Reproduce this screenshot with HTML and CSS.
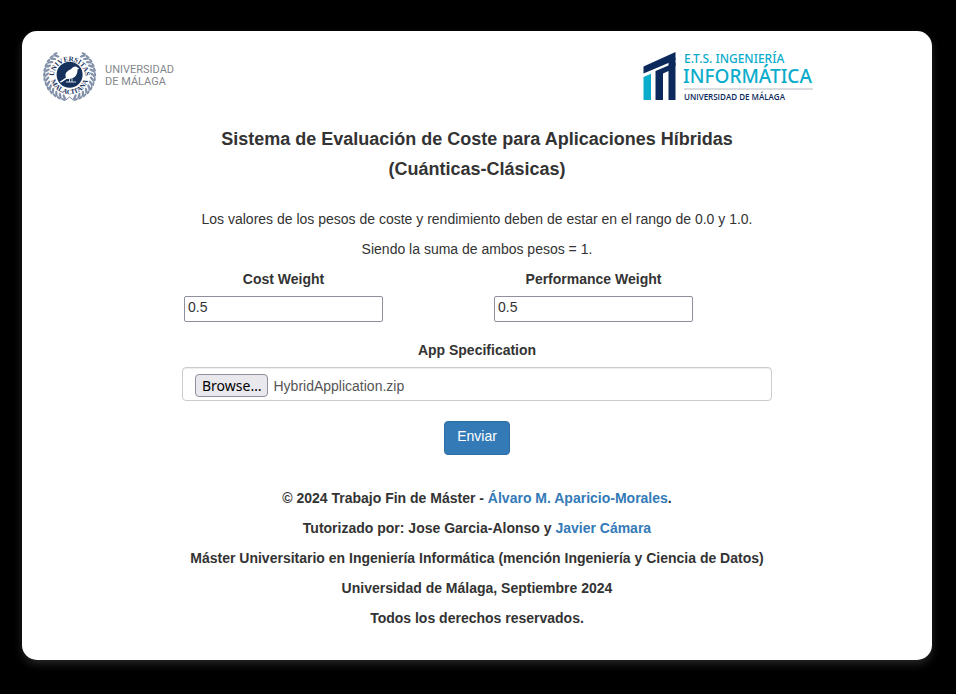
FILE: index.html
```html
<!DOCTYPE html>
<html lang="es">
<head>
<meta charset="utf-8">
<meta name="viewport" content="width=device-width, initial-scale=1">
<title>Sistema de Evaluación de Coste</title>
<link rel="stylesheet" href="styles.css">
</head>
<body>
<main class="card">
  <header class="logos">
    <svg class="logo logo-uma" viewBox="42 50 134 52" role="img" aria-label="Universidad de Málaga">
      <defs>
        <g id="leaf">
          <ellipse cx="69.6" cy="52.2" rx="1.2" ry="2.6" transform="rotate(38 69.6 52.2)"/>
          <ellipse cx="69.6" cy="49.4" rx="1.1" ry="2.4" transform="rotate(80 69.6 49.4)"/>
          <circle cx="71.4" cy="50.6" r="0.9"/>
        </g>
        <g id="branch">
          <use href="#leaf" transform="rotate(34 69.6 74.8)"/>
          <use href="#leaf" transform="rotate(45 69.6 74.8)"/>
          <use href="#leaf" transform="rotate(56 69.6 74.8)"/>
          <use href="#leaf" transform="rotate(67 69.6 74.8)"/>
          <use href="#leaf" transform="rotate(78 69.6 74.8)"/>
          <use href="#leaf" transform="rotate(89 69.6 74.8)"/>
          <use href="#leaf" transform="rotate(100 69.6 74.8)"/>
          <use href="#leaf" transform="rotate(111 69.6 74.8)"/>
          <use href="#leaf" transform="rotate(122 69.6 74.8)"/>
          <use href="#leaf" transform="rotate(133 69.6 74.8)"/>
          <use href="#leaf" transform="rotate(144 69.6 74.8)"/>
          <use href="#leaf" transform="rotate(155 69.6 74.8)"/>
          <use href="#leaf" transform="rotate(166 69.6 74.8)"/>
        </g>
        <path id="arc-top" d="M55.500 83.500A15.600 15.600 0 1 1 83.700 83.500"/>
        <path id="arc-bottom" d="M50.200 74.800A19.400 19.400 0 0 0 89 74.800"/>
      </defs>
      <g class="wreath">
        <use href="#branch"/>
        <use href="#branch" transform="translate(139.2 0) scale(-1 1)"/>
        <path d="M66 100l3.600-3 3.600 3" fill="none" stroke="#8190a8"/>
      </g>
      <circle cx="69.6" cy="74.8" r="13" fill="#16325c"/>
      <path d="M59.500 82l6.500-4.500c-1.500-4 .8-6.500 4.500-8l2.500-2.200c1.400-1.300 3.600-1.200 4.500.3l1.700 1-1.700.8c.2 5.200-2.800 8.700-7.200 9.400l-3.800.1-5.300 3.700z" fill="#fff"/>
      <path d="M66 82h10M69.500 78.500v3.500M72 78.500v3.500" stroke="#fff" stroke-width=".8"/>
      <text class="seal-text"><textPath href="#arc-top" startOffset="50%" text-anchor="middle">UNIVERSITAS</textPath></text>
      <text class="seal-text"><textPath href="#arc-bottom" startOffset="50%" text-anchor="middle">MALACITANA</textPath></text>
      <text class="uma-text" x="105" y="73">UNIVERSIDAD</text>
      <text class="uma-text" x="105" y="85">DE MÁLAGA</text>
    </svg>
    <svg class="logo logo-ets" viewBox="642 50 172 52" role="img" aria-label="E.T.S. Ingeniería Informática">
      <path d="M643.500 66.500L675.500 52v8L643.500 73.500z" fill="#0b2a5b"/>
      <path d="M655.500 71L675.500 62.500V100h-7V71l-5.500 2.500V100h-7.500z" fill="#0b2a5b"/>
      <path d="M668.500 58h7v8h-7z" fill="#0b2a5b"/>
      <path d="M643.500 77l7.500-3.200V100h-7.500z" fill="#0aaccb"/>
      <text class="ets-school" x="684" y="63">E.T.S. INGENIERÍA</text>
      <text class="ets-name" x="683" y="83">INFORMÁTICA</text>
      <path d="M684 89h129" stroke="#b5b9c0"/>
      <text class="ets-uni" x="684" y="100">UNIVERSIDAD DE MÁLAGA</text>
    </svg>
  </header>

  <h1 class="title">Sistema de Evaluación de Coste para Aplicaciones Híbridas<br>(Cuánticas-Clásicas)</h1>

  <p>Los valores de los pesos de coste y rendimiento deben de estar en el rango de 0.0 y 1.0.</p>
  <p>Siendo la suma de ambos pesos = 1.</p>

  <form class="form">
    <div class="weights">
      <div class="field">
        <label for="cost">Cost Weight</label>
        <input class="weight" id="cost" type="text" value="0.5">
      </div>
      <div class="field">
        <label for="performance">Performance Weight</label>
        <input class="weight" id="performance" type="text" value="0.5">
      </div>
    </div>
    <label class="spec-label" for="spec">App Specification</label>
    <label class="file-box">
      <input class="file-input" id="spec" type="file">
      <span class="browse">Browse…</span>
      <span>HybridApplication.zip</span>
    </label>
    <button class="submit" type="submit">Enviar</button>
  </form>

  <footer class="footer">
    <p>© 2024 Trabajo Fin de Máster - <a href="#">Álvaro M. Aparicio-Morales</a>.</p>
    <p>Tutorizado por: Jose Garcia-Alonso y <a href="#">Javier Cámara</a></p>
    <p>Máster Universitario en Ingeniería Informática (mención Ingeniería y Ciencia de Datos)</p>
    <p>Universidad de Málaga, Septiembre 2024</p>
    <p>Todos los derechos reservados.</p>
  </footer>
</main>
</body>
</html>
```
FILE: styles.css
```css
* {
  box-sizing: border-box;
}

body {
  margin: 0;
  padding: 31px 24px 34px 22px;
  background: #000;
  color: #333;
  font: 14px/30px "Liberation Sans", Arial, sans-serif;
  text-align: center;
}

.card {
  padding: 19px 20px 27px;
  background: #fff;
  border-radius: 15px;
  box-shadow: 0 4px 8px rgba(255, 255, 255, 0.15);
}

.logos {
  display: grid;
  grid-template-columns: 69% 31%;
}

.logo {
  display: block;
  height: 52px;
}

.wreath {
  fill: #8190a8;
}

.seal-text {
  fill: #16325c;
  font: bold 7px "Liberation Serif", serif;
}

.uma-text {
  fill: #85888c;
  font: 11px Roboto, sans-serif;
}

.ets-school {
  fill: #0aaccb;
  font: 500 12px "Noto Sans", sans-serif;
}

.ets-name {
  fill: #0aaccb;
  font: 500 19px "Noto Sans", sans-serif;
}

.ets-uni {
  fill: #0b2a5b;
  font: 600 8px "Open Sans", sans-serif;
}

.title {
  margin: 22px 0 20px;
  font-size: 18px;
  line-height: 30px;
}

p {
  margin: 0;
}

.form {
  max-width: 590px;
  margin: 0 auto 28px;
}

.weights {
  display: grid;
  grid-template-columns: 310px 1fr;
}

.field {
  width: 203px;
  padding: 0 2px;
}

label {
  display: block;
  font-weight: bold;
}

.weight {
  display: block;
  width: 100%;
  height: 26px;
  margin: 2px 0 13px;
  padding: 0 3px 4px;
  border: 1px solid #8f8f9d;
  border-radius: 2px;
  background: #fff;
  color: #333;
  font: inherit;
  line-height: 20px;
}

.file-box {
  position: relative;
  display: flex;
  align-items: center;
  gap: 5px;
  height: 34px;
  margin: 2px 0 20px;
  padding: 3px 12px 0;
  border: 1px solid #ccc;
  border-radius: 4px;
  box-shadow: inset 0 1px 1px rgba(0, 0, 0, 0.075);
  color: #555;
  font-weight: normal;
}

.file-input {
  position: absolute;
  inset: 0;
  opacity: 0;
}

.browse {
  padding: 0 6px;
  border: 1px solid #8f8f9d;
  border-radius: 4px;
  background: #e9e9ed;
  color: #000;
  font: 14px/21px "Noto Sans", sans-serif;
}

.submit {
  display: block;
  height: 34px;
  margin: 0 auto;
  padding: 0 12px 4px;
  border: 1px solid #2e6da4;
  border-radius: 4px;
  background: #337ab7;
  color: #fff;
  font: inherit;
  line-height: 20px;
}

.footer {
  font-weight: bold;
}

a {
  color: #337ab7;
  text-decoration: none;
}
```
